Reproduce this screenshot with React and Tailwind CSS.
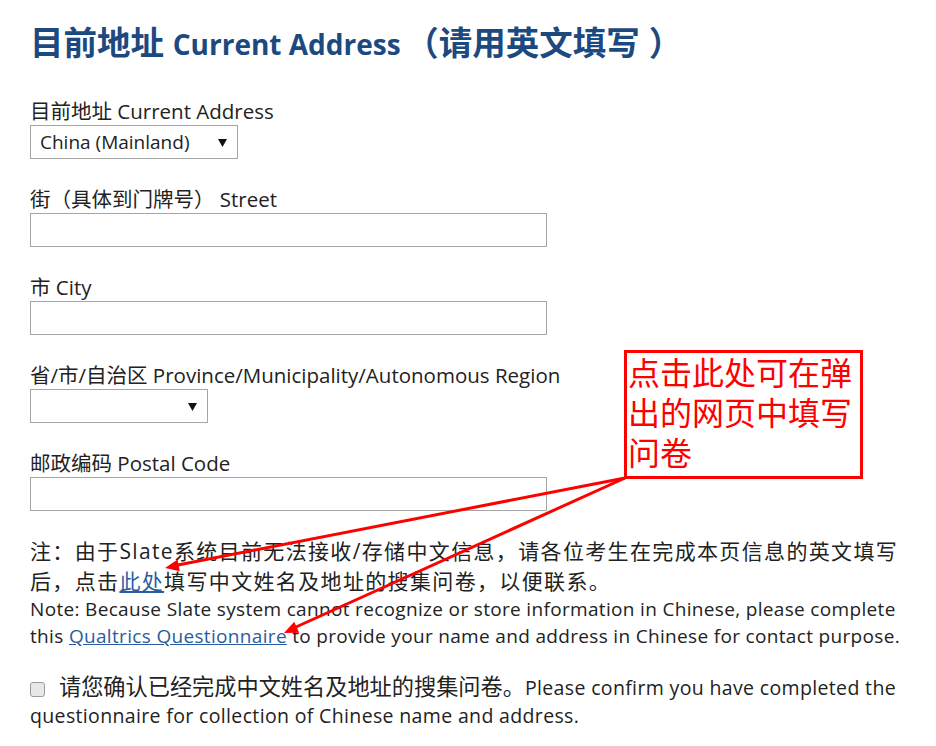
const sans = "font-['Open_Sans','Noto_Sans_CJK_SC',sans-serif]"

function Label({ children }) {
  return <div className="h-[24px] whitespace-nowrap text-[20.5px] leading-[24px] text-[#222]">{children}</div>
}

function TextInput() {
  return <div className="h-[34px] w-[517px] border border-[#a6a6a6] bg-white" />
}

function Select({ value, width }) {
  return (
    <div
      className="relative flex h-[34px] items-center border border-[#a6a6a6] bg-white pl-[9px] text-[19px] text-[#222]"
      style={{ width }}
    >
      <span>{value}</span>
      <svg className="absolute right-[10px] top-[12px]" width="9" height="9" viewBox="0 0 9 9">
        <polygon points="0,1 9,1 4.5,9" fill="#111" />
      </svg>
    </div>
  )
}

function Field({ label, children }) {
  return (
    <div className="flex flex-col gap-[2px]">
      <Label>{label}</Label>
      {children}
    </div>
  )
}

export default function App() {
  return (
    <div className={`relative min-h-[746px] w-[936px] bg-white pl-[30px] pt-[20px] ${sans}`}>
      <h1 className="whitespace-nowrap text-[33.5px] font-bold leading-[44px] text-[#1c4a80]">
        目前地址 <span className="text-[28px]">Current Address</span>{' '}
        <span className="-ml-[4px]">（请用英文填写</span>
        <span className="ml-[9px]">）</span>
      </h1>

      <div className="mt-[33px] flex flex-col gap-[28px]">
        <Field label="目前地址 Current Address">
          <Select value="China (Mainland)" width={208} />
        </Field>
        <Field label="街（具体到门牌号） Street">
          <TextInput />
        </Field>
        <Field label="市 City">
          <TextInput />
        </Field>
        <Field label="省/市/自治区 Province/Municipality/Autonomous Region">
          <Select value="" width={178} />
        </Field>
        <Field label="邮政编码 Postal Code">
          <TextInput />
        </Field>
      </div>

      <div className="mt-[25px] whitespace-nowrap text-[21px] leading-[30px] tracking-[1.35px] text-[#222]">
        注：由于Slate系统目前无法接收/存储中文信息，请各位考生在完成本页信息的英文填写
        <br />
        后，点击<a className="text-[#2a5d9f] underline">此处</a>填写中文姓名及地址的搜集问卷，以便联系。
      </div>
      <div className="whitespace-nowrap text-[19px] leading-[27px] tracking-[0.33px] text-[#222]">
        Note: Because Slate system cannot recognize or store information in Chinese, please complete
        <br />
        this <a className="text-[#2a5d9f] underline">Qualtrics Questionnaire</a> to provide your name and address in
        Chinese for contact purpose.
      </div>

      <div className="mt-[23px] whitespace-nowrap text-[19.5px] leading-[28px] tracking-[0.35px] text-[#222]">
        <span className="mr-[14px] inline-block h-[15px] w-[15px] translate-y-[2px] rounded-[3px] border border-[#9a9a9a] bg-[#e8e8e8]" />
        <span className="text-[22.2px] tracking-normal">请您确认已经完成中文姓名及地址的搜集问卷。</span>
        Please confirm you have completed the
        <br />
        questionnaire for collection of Chinese name and address.
      </div>

      <div className="absolute left-[624px] top-[350px] h-[129px] w-[239px] border-[3px] border-[#ff0000] pl-[1px] text-[32px] leading-[40px] text-[#ff0000]">
        点击此处可在弹出的网页中填写问卷
      </div>

      <svg className="pointer-events-none absolute left-0 top-0" width="936" height="746">
        <line x1="625" y1="478" x2="178" y2="565" stroke="#ff0000" strokeWidth="3" />
        <polygon points="165,568 177.6,559.4 179.8,571.2" fill="#ff0000" />
        <line x1="625" y1="478" x2="296" y2="627" stroke="#ff0000" strokeWidth="3" />
        <polygon points="284,633 294.2,621.7 299.2,632.7" fill="#ff0000" />
      </svg>
    </div>
  )
}
